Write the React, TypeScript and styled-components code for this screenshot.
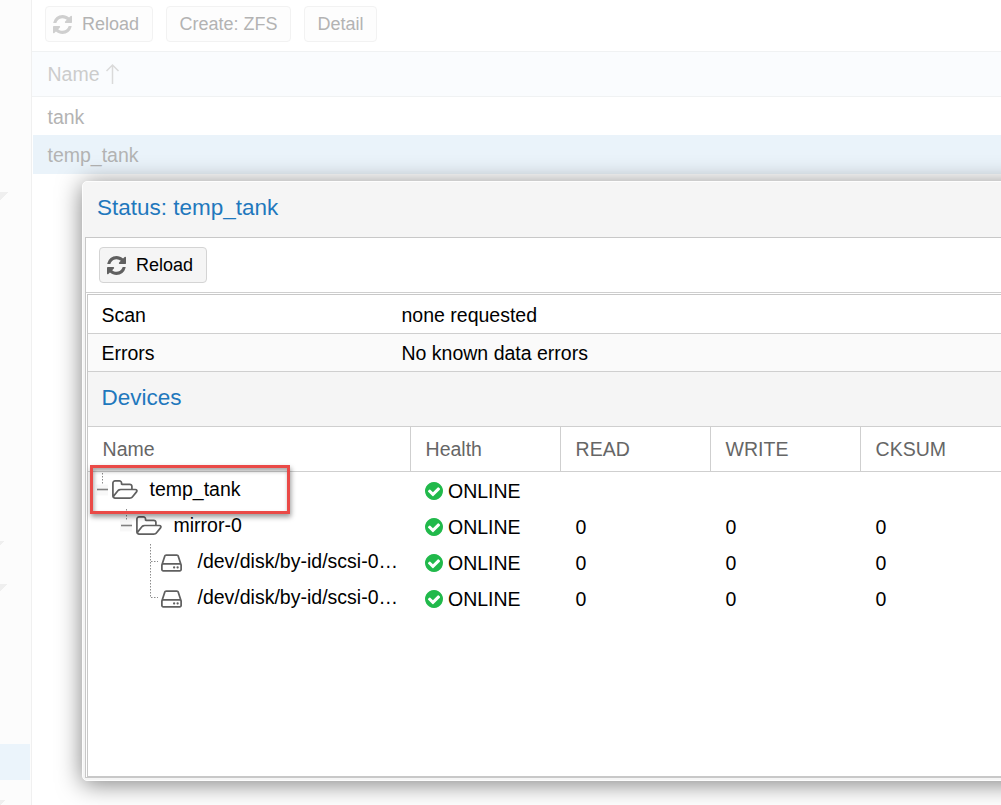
import React from "react";
import styled, { createGlobalStyle } from "styled-components";

const GlobalStyle = createGlobalStyle`
  * { box-sizing: border-box; }
  body {
    margin: 0;
    overflow: hidden;
    background: #fff;
    font-family: "Liberation Sans", Arial, sans-serif;
  }
`;

const Page = styled.div`
  position: relative;
  display: flex;
  width: 1001px;
  height: 805px;
  overflow: hidden;
`;

const Sidebar = styled.aside`
  display: flex;
  flex-direction: column;
  width: 32px;
  flex: none;
  background: #fcfcfc;
  border-right: 1px solid #f0f0f0;
`;

const Fold = styled.span<{ $before: number; $w: number }>`
  width: ${(p) => p.$w}px;
  height: ${(p) => p.$w}px;
  margin-top: ${(p) => p.$before}px;
  background: linear-gradient(135deg, #efefef 50%, transparent 50%);
`;

const SidebarSelection = styled.div`
  width: 30px;
  height: 36px;
  margin-top: 152px;
  background: #ebf4fb;
`;

const Main = styled.main`
  flex: 1;
  min-width: 0;
`;

const PoolToolbar = styled.div`
  display: flex;
  align-items: flex-start;
  gap: 13px;
  height: 52px;
  padding: 6px 0 0 13px;
  border-bottom: 1px solid #f0f2f3;
`;

const Button = styled.button<{ $faded?: boolean; $w: number }>`
  display: flex;
  align-items: center;
  justify-content: center;
  gap: 10px;
  width: ${(p) => p.$w}px;
  height: 36px;
  padding: 0;
  border: 1px solid ${(p) => (p.$faded ? "#f2f2f2" : "#d4d4d4")};
  border-radius: 4px;
  background: ${(p) => (p.$faded ? "#fdfdfd" : "#f5f5f5")};
  color: ${(p) => (p.$faded ? "#b3b3b3" : "#000")};
  font: 18px/34px "Liberation Sans", Arial, sans-serif;
  svg {
    margin-left: -6px;
    fill: ${(p) => (p.$faded ? "#cfcfcf" : "#606060")};
  }
`;

const PoolHeader = styled.div`
  display: flex;
  align-items: center;
  gap: 4px;
  height: 45px;
  padding-left: 15.5px;
  border-bottom: 1px solid #f0f2f3;
  background: #fafcfe;
  color: #cccccc;
  font-size: 19.5px;
`;

const PoolRow = styled.div<{ $selected?: boolean }>`
  height: ${(p) => (p.$selected ? 39 : 38)}px;
  margin-left: 1px;
  padding-left: 14.5px;
  background: ${(p) => (p.$selected ? "#eaf3fa" : "#fff")};
  color: #b3b3b3;
  font-size: 19.5px;
  line-height: 40px;
`;

const Dialog = styled.section`
  position: absolute;
  left: 82px;
  top: 181px;
  width: 960px;
  height: 600px;
  padding-left: 2px;
  border: 1px solid #fdfdfd;
  border-radius: 5px;
  background: #f5f5f5;
  box-shadow: 0 3px 24px rgba(0, 0, 0, 0.5);
`;

const DialogTitle = styled.h1`
  height: 55px;
  margin: 0;
  padding-left: 12px;
  color: #1f78bd;
  font-size: 22.5px;
  font-weight: 400;
  line-height: 51px;
`;

const DialogBody = styled.div`
  height: 541px;
  border: 1px solid #c8c8c8;
  background: #fff;
`;

const DialogToolbar = styled.div`
  height: 55px;
  padding: 9px 0 0 13px;
  border-bottom: 1px solid #cfcfcf;
`;

const Content = styled.div`
  height: 483px;
  margin: 1px 0 0 1px;
  border: 1px solid #c8c8c8;
  border-right: 0;
`;

const InfoRow = styled.div<{ $alt?: boolean }>`
  display: grid;
  grid-template-columns: 300px 1fr;
  height: ${(p) => (p.$alt ? 38 : 39)}px;
  padding-left: 13.5px;
  border-bottom: 1px solid #cfcfcf;
  background: ${(p) => (p.$alt ? "#fafafa" : "#fff")};
  color: #000;
  font-size: 19.5px;
  line-height: ${(p) => (p.$alt ? 38 : 40)}px;
`;

const DevicesTitle = styled.h2`
  height: 55px;
  margin: 0;
  padding-left: 13.5px;
  border-bottom: 1px solid #cfcfcf;
  background: #f5f5f5;
  color: #1f78bd;
  font-size: 22.5px;
  font-weight: 400;
  line-height: 52px;
`;

const columns = "323px 150px 150px 150px 1fr";

const GridHeader = styled.div`
  display: grid;
  grid-template-columns: ${columns};
  height: 45px;
  border-bottom: 1px solid #cfcfcf;
`;

const HeaderCell = styled.div`
  padding-left: 14.6px;
  border-right: 1px solid #cfcfcf;
  color: #666;
  font-size: 19.5px;
  line-height: 44px;
`;

const GridRow = styled.div`
  display: grid;
  grid-template-columns: ${columns};
  height: 36px;
  color: #000;
  font-size: 19.5px;
`;

const NameCell = styled.div<{ $depth: number }>`
  display: flex;
  align-items: center;
  height: 36px;
  padding-left: ${(p) => p.$depth * 24}px;
  line-height: 34px;
`;

const NodeIcon = styled.span<{ $disk?: boolean }>`
  display: flex;
  flex: none;
  width: 37.5px;
  padding: ${(p) => (p.$disk ? "1px 0 0 1.4px" : "0 0 1px")};
  svg { fill: #606060; }
`;

const NameText = styled.span`
  height: 36px;
  white-space: nowrap;
`;

const Cell = styled.div`
  display: flex;
  align-items: center;
  gap: 5px;
  padding: 2px 0 0 14.6px;
  svg { fill: #21b94b; margin-left: -0.6px; }
`;

const Highlight = styled.div`
  position: absolute;
  left: 90px;
  top: 465px;
  width: 200px;
  height: 49px;
  border: 3px solid #ea4a47;
  box-shadow: 1px 3px 5px rgba(0, 0, 0, 0.4), inset 1px 3px 4px rgba(0, 0, 0, 0.35);
`;

const RefreshIcon = () => (
  <svg width="19" height="19" viewBox="0 0 1536 1536">
    <path d="M1511 928q0 5-1 7-64 268-268 434.5t-478 166.5q-146 0-282.5-55t-243.5-157l-129 129q-19 19-45 19t-45-19-19-45v-448q0-26 19-45t45-19h448q26 0 45 19t19 45-19 45l-137 137q71 66 161 102t187 36q134 0 250-65t186-179q11-17 53-117 8-23 30-23h192q13 0 22.5 9.5t9.5 22.5zm25-800v448q0 26-19 45t-45 19h-448q-26 0-45-19t-19-45 19-45l138-138q-148-137-349-137-134 0-250 65t-186 179q-11 17-53 117-8 23-30 23h-199q-13 0-22.5-9.5t-9.5-22.5v-7q65-268 270-434.5t480-166.5q146 0 284 55.5t245 156.5l130-129q19-19 45-19t45 19 19 45z" />
  </svg>
);

const FolderIcon = () => (
  <svg width="26" height="19" viewBox="0 0 1920 1408">
    <path d="M1781 803q0-35-53-35h-1088q-40 0-85.5 21.5t-71.5 52.5l-294 363q-18 24-18 40 0 35 53 35h1088q40 0 86-22t71-53l294-363q18-22 18-39zm-1141-163h768v-160q0-40-28-68t-68-28h-576q-40 0-68-28t-28-68v-64q0-40-28-68t-68-28h-320q-40 0-68 28t-28 68v853l256-315q44-53 116-87.5t140-34.5zm1269 163q0 62-46 120l-295 363q-43 53-116 87.5t-140 34.5h-1088q-92 0-158-66t-66-158v-960q0-92 66-158t158-66h320q92 0 158 66t66 158v32h544q92 0 158 66t66 158v160h192q54 0 99 24.5t67 70.5q15 32 15 68z" />
  </svg>
);

const DiskIcon = () => (
  <svg width="21" height="18" viewBox="128 256 1536 1280">
    <path d="M1168 1216q0 33-23.5 56.5t-56.5 23.5-56.5-23.5-23.5-56.5 23.5-56.5 56.5-23.5 56.5 23.5 23.5 56.5zm256 0q0 33-23.5 56.5t-56.5 23.5-56.5-23.5-23.5-56.5 23.5-56.5 56.5-23.5 56.5 23.5 23.5 56.5zm112 160v-320q0-13-9.5-22.5t-22.5-9.5h-1216q-13 0-22.5 9.5t-9.5 22.5v320q0 13 9.5 22.5t22.5 9.5h1216q13 0 22.5-9.5t9.5-22.5zm-1230-480h1180l-157-482q-4-13-16-21.5t-26-8.5h-782q-14 0-26 8.5t-16 21.5zm1358 160v320q0 66-47 113t-113 47h-1216q-66 0-113-47t-47-113v-320q0-25 16-75l197-606q17-53 63-86t101-33h782q55 0 101 33t63 86l197 606q16 50 16 75z" />
  </svg>
);

const CheckIcon = () => (
  <svg width="18" height="18" viewBox="128 128 1536 1536">
    <path d="M1412 734q0-28-18-46l-91-90q-19-19-45-19t-45 19l-408 407-226-226q-19-19-45-19t-45 19l-91 90q-18 18-18 46 0 27 18 45l362 362q19 19 45 19 27 0 46-19l543-543q18-18 18-45zm252 162q0 209-103 385.5t-279.5 279.5-385.5 103-385.5-103-279.5-279.5-103-385.5 103-385.5 279.5-279.5 385.5-103 385.5 103 279.5 279.5 103 385.5z" />
  </svg>
);

const SortArrow = () => (
  <svg width="16" height="22" viewBox="0 0 16 22" fill="none" stroke="#dadada" strokeWidth="1.5">
    <path d="M8.5 21V2M2.5 8l6-6 6 6" />
  </svg>
);

type Branch = "minus" | "tee" | "elbow";

const BranchLines = ({ kind }: { kind: Branch }) => (
  <svg width="24" height="36" viewBox="0 0 24 36" fill="none" stroke="#8c8c8c">
    {kind === "minus" ? (
      <>
        <path d="M8 12.5h12v11h-12z" fill="#f8f8f8" stroke="none" />
        <path d="M14.5 1v11" strokeDasharray="1.5 1.5" />
        <path d="M9 17.5h11" stroke="#808080" strokeWidth="1.6" />
      </>
    ) : (
      <>
        <path d={kind === "tee" ? "M14.5 0v34" : "M14.5 0v18"} strokeDasharray="1.5 1.5" />
        <path d="M15 17.5h7" strokeDasharray="1.5 1.5" />
      </>
    )}
  </svg>
);

interface Device {
  name: string;
  depth: number;
  branch: Branch;
  disk?: boolean;
  counts: string[];
}

const zeros = ["0", "0", "0"];
const devices: Device[] = [
  { name: "temp_tank", depth: 0, branch: "minus", counts: ["", "", ""] },
  { name: "mirror-0", depth: 1, branch: "minus", counts: zeros },
  { name: "/dev/disk/by-id/scsi-0…", depth: 2, branch: "tee", disk: true, counts: zeros },
  { name: "/dev/disk/by-id/scsi-0…", depth: 2, branch: "elbow", disk: true, counts: zeros },
];

export default function App() {
  return (
    <Page>
      <GlobalStyle />
      <Sidebar>
        <Fold $before={192} $w={9} />
        <Fold $before={340} $w={5} />
        <Fold $before={38} $w={8} />
        <SidebarSelection />
        <Fold $before={20} $w={5} />
      </Sidebar>
      <Main>
        <PoolToolbar>
          <Button $faded $w={108}><RefreshIcon />Reload</Button>
          <Button $faded $w={125}>Create: ZFS</Button>
          <Button $faded $w={73}>Detail</Button>
        </PoolToolbar>
        <PoolHeader>Name<SortArrow /></PoolHeader>
        <PoolRow>tank</PoolRow>
        <PoolRow $selected>temp_tank</PoolRow>
      </Main>
      <Dialog>
        <DialogTitle>Status: temp_tank</DialogTitle>
        <DialogBody>
          <DialogToolbar>
            <Button $w={108}><RefreshIcon />Reload</Button>
          </DialogToolbar>
          <Content>
            <InfoRow><span>Scan</span><span>none requested</span></InfoRow>
            <InfoRow $alt><span>Errors</span><span>No known data errors</span></InfoRow>
            <DevicesTitle>Devices</DevicesTitle>
            <GridHeader>
              {["Name", "Health", "READ", "WRITE", "CKSUM"].map((title) => (
                <HeaderCell key={title}>{title}</HeaderCell>
              ))}
            </GridHeader>
            {devices.map((device, i) => (
              <GridRow key={i}>
                <NameCell $depth={device.depth}>
                  <BranchLines kind={device.branch} />
                  <NodeIcon $disk={device.disk}>
                    {device.disk ? <DiskIcon /> : <FolderIcon />}
                  </NodeIcon>
                  <NameText>{device.name}</NameText>
                </NameCell>
                <Cell><CheckIcon />ONLINE</Cell>
                {device.counts.map((count, c) => (
                  <Cell key={c}>{count}</Cell>
                ))}
              </GridRow>
            ))}
          </Content>
        </DialogBody>
      </Dialog>
      <Highlight />
    </Page>
  );
}
